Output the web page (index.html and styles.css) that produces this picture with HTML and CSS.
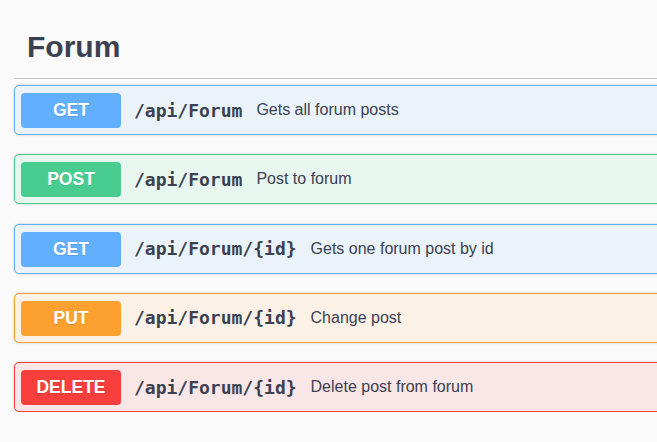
FILE: index.html
```html
<!DOCTYPE html>
<html lang="en">
<head>
<meta charset="utf-8">
<title>Forum</title>
<link rel="stylesheet" href="styles.css">
</head>
<body>
<div class="page">
  <section class="tag">
    <h3 class="tag-title">Forum</h3>
    <div class="ops">
      <div class="op op-get">
        <span class="method">GET</span>
        <span class="path">/api/Forum</span>
        <span class="desc">Gets all forum posts</span>
      </div>
      <div class="op op-post">
        <span class="method">POST</span>
        <span class="path">/api/Forum</span>
        <span class="desc">Post to forum</span>
      </div>
      <div class="op op-get">
        <span class="method">GET</span>
        <span class="path">/api/Forum/{id}</span>
        <span class="desc">Gets one forum post by id</span>
      </div>
      <div class="op op-put">
        <span class="method">PUT</span>
        <span class="path">/api/Forum/{id}</span>
        <span class="desc">Change post</span>
      </div>
      <div class="op op-delete">
        <span class="method">DELETE</span>
        <span class="path">/api/Forum/{id}</span>
        <span class="desc">Delete post from forum</span>
      </div>
    </div>
  </section>
</div>
</body>
</html>
```

FILE: styles.css
```css
html, body {
  margin: 0;
  padding: 0;
  background: #fafafa;
  overflow: hidden;
}

body {
  font-family: "Liberation Sans", Arial, sans-serif;
  color: #3b4151;
}

.page {
  width: 900px;
  padding: 17px 0 0 14px;
}

.tag-title {
  margin: 0 0 6px;
  padding: 12px 0 13px 13px;
  font-size: 30px;
  line-height: 36px;
  font-weight: 700;
  color: #3b4151;
  border-bottom: 1px solid rgba(59, 65, 81, 0.3);
}

.ops {
  display: flex;
  flex-direction: column;
  gap: 19.25px;
}

.op {
  display: flex;
  align-items: center;
  height: 48px;
  padding: 0 6px;
  border: 1px solid;
  border-radius: 5px;
  box-shadow: 0 0 3px rgba(0, 0, 0, 0.19);
}

.method {
  flex: none;
  width: 100px;
  height: 35px;
  margin-top: 1px;
  border-radius: 4px;
  display: flex;
  align-items: center;
  justify-content: center;
  color: #fff;
  font-size: 17.5px;
  font-weight: 700;
  text-shadow: 0 1px 0 rgba(0, 0, 0, 0.1);
}

.path {
  margin-left: 13px;
  font-family: "DejaVu Sans Mono", "Liberation Mono", monospace;
  font-size: 18px;
  font-weight: 700;
  color: #3b4151;
}

.desc {
  margin-left: 14px;
  font-size: 16px;
  color: #3b4151;
}

.op-get { background: #ebf3fa; border-color: #61affe; }
.op-get .method { background: #61affe; }

.op-post { background: #e7f6ef; border-color: #49cc90; }
.op-post .method { background: #49cc90; }

.op-put { background: #fbf1e6; border-color: #fca130; }
.op-put .method { background: #fca130; }

.op-delete { background: #f9e6e6; border-color: #f93e3e; }
.op-delete .method { background: #f93e3e; }
```
